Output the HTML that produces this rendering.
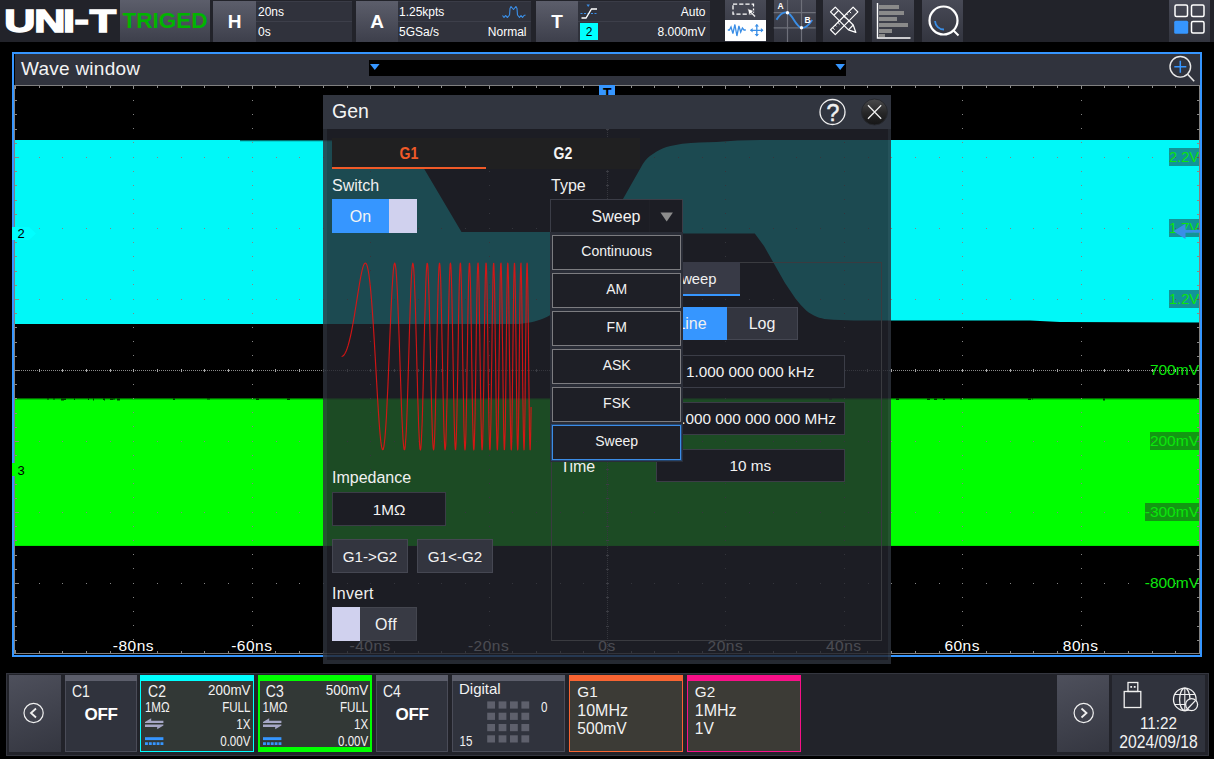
<!DOCTYPE html>
<html><head><meta charset="utf-8"><title>Oscilloscope - Gen</title>
<style>
html,body{margin:0;padding:0;background:#000;}
body{width:1214px;height:759px;position:relative;overflow:hidden;font-family:"Liberation Sans",sans-serif;color:#fff;}
.a{position:absolute;box-sizing:border-box;}
.t{position:absolute;white-space:nowrap;line-height:1;}
.c{text-align:center;}
.r{text-align:right;}
.b{font-weight:bold;}
#top{left:0;top:0;width:1214px;height:42px;background:#22232a;}
.tb{background:linear-gradient(#5c5e6b,#3d3f4b);}
.tp{background:#30323c;}
.ti{background:linear-gradient(#484a56,#33353f);}
.f12{font-size:12px;}
.f13{font-size:13px;}
.f14{font-size:14px;}
.f15{font-size:15px;}
.f16{font-size:16px;}
</style></head><body>
<div class="a" id="top">
<svg class="a" style="left:0;top:0" width="120" height="42"><text transform="scale(1.39 1)" x="3.10 24.69 45.33 53.52 64.59" y="32.1 32.1 32.1 29.6 32.1" font-family="Liberation Sans, sans-serif" font-weight="bold" font-size="31" fill="#fff" stroke="#fff" stroke-width="1.8" vector-effect="non-scaling-stroke" stroke-linejoin="miter">UNI-T</text></svg>
<div class="a tb" style="left:120px;top:0;width:90px;height:42px;"></div>
<div class="t b c" style="left:120px;top:10.4px;width:90px;font-size:22.5px;color:#00b400;">TRIGED</div>

<div class="a tb" style="left:213px;top:1px;width:43px;height:41px;"></div>
<div class="t b c" style="left:213px;top:12px;width:43px;font-size:19px;">H</div>
<div class="a tp" style="left:256px;top:1px;width:95.5px;height:41px;border-top:1px solid #3a3c47"></div>
<div class="a" style="left:256px;top:21px;width:95.5px;height:1px;background:#3d3f4a"></div>
<div class="t f12" style="left:258px;top:6px;">20ns</div>
<div class="t f12" style="left:258px;top:26px;">0s</div>

<div class="a tb" style="left:356px;top:1px;width:42px;height:41px;"></div>
<div class="t b c" style="left:356px;top:12px;width:42px;font-size:19px;">A</div>
<div class="a tp" style="left:398px;top:1px;width:133px;height:41px;border-top:1px solid #3a3c47"></div>
<div class="a" style="left:398px;top:21px;width:133px;height:1px;background:#3d3f4a"></div>
<div class="t f12" style="left:399px;top:6px;">1.25kpts</div>
<div class="t f12" style="left:399px;top:26px;">5GSa/s</div>
<div class="t f12 r" style="left:460px;width:66.5px;top:26px;">Normal</div>
<svg class="a" style="left:500px;top:4px" width="28" height="16"><path d="M2.5 11.5 L4 13.5 L5.5 11.5 L7.5 13.5 L9.5 11 L10 4.5 L11 2.5 L13.5 5.5 L15.9 2.5 L17 4.5 L17.5 11 L19.5 13.5 L21 11.5 L22.5 13.5 L24 11.5 L25.5 11" fill="none" stroke="#3a8ee6" stroke-width="1.15" stroke-linejoin="round"/></svg>

<div class="a tb" style="left:536px;top:1px;width:42px;height:41px;"></div>
<div class="t b c" style="left:536px;top:12px;width:42px;font-size:19px;">T</div>
<div class="a tp" style="left:578px;top:1px;width:132px;height:41px;border-top:1px solid #3a3c47"></div>
<div class="a" style="left:578px;top:21px;width:132px;height:1px;background:#3d3f4a"></div>
<svg class="a" style="left:580px;top:3px" width="20" height="18"><path d="M0.5 10.5 h17" stroke="#3a8ee6" stroke-width="1" stroke-dasharray="2 1.5" fill="none"/><path d="M1.5 15 h4.5 l5.5 -9 h5.5" stroke="#fff" stroke-width="1.3" fill="none"/><path d="M6.5 1.5 h3.4 l-1.7 2.6 z" fill="#3a8ee6"/></svg>
<div class="a" style="left:580px;top:23px;width:18px;height:17px;background:#00ffff"></div>
<div class="t f12 c" style="left:580px;top:26px;width:18px;color:#000;">2</div>
<div class="t f12 r" style="left:640px;width:65.5px;top:6px;">Auto</div>
<div class="t f12 r" style="left:640px;width:65.5px;top:26px;">8.000mV</div>

<div class="a ti" style="left:724.5px;top:0;width:41.7px;height:42px;"></div>
<div class="a" style="left:724.5px;top:20px;width:41.7px;height:21px;background:#fff"></div>
<svg class="a" style="left:720px;top:0" width="48" height="42">
<rect x="13" y="4.2" width="20.5" height="10" fill="none" stroke="#fff" stroke-width="1.3" stroke-dasharray="4.2 2"/>
<path d="M27.5 8.6 l7 2.4 l-2.6 1.1 l3.9 4 l-1.3 1.2 l-3.8 -4 l-1.3 2.5 z" fill="#fff" stroke="#3c3e49" stroke-width="0.7"/>
<path d="M7.8 30 h1.6 l1.6 -3 l1.9 6.5 l2 -9 l2 11.5 l2 -10 l1.8 6 l1.7 -4 l1.6 2 h1.8" fill="none" stroke="#3a8ee6" stroke-width="1.3"/>
<path d="M30.5 30.3 h12.5 M36.8 24.6 v11.4" stroke="#3a8ee6" stroke-width="1.3" fill="none"/>
<path d="M30 30.3 l2.6 -2.2 v4.4z M43.5 30.3 l-2.6 -2.2 v4.4z M36.8 24 l-2.2 2.6 h4.4z M36.8 36.6 l-2.2 -2.6 h4.4z" fill="#3a8ee6"/>
</svg>

<div class="a ti" style="left:774px;top:0;width:42px;height:42px;"></div>
<svg class="a" style="left:772.3px;top:0" width="43.7" height="42">
<path d="M15.5 0 v42 M29.5 0 v42 M1.7 12.7 h42 M1.7 27.8 h42" stroke="#6e707a" stroke-width="1.2" fill="none"/>
<path d="M4.5 19.8 C8 14,12 11.5,15.5 12.7 C21 15,23.5 26.5,29.5 27.8 C34 28.6,37.5 24,40.2 20" fill="none" stroke="#3a8ee6" stroke-width="1.9"/>
<circle cx="15.5" cy="12.7" r="1.7" fill="#fff"/><circle cx="29.5" cy="27.8" r="1.7" fill="#fff"/>
<text x="5.6" y="8.7" font-size="8.5" font-weight="bold" fill="#fff" font-family="Liberation Sans, sans-serif">A</text>
<text x="32.6" y="22.8" font-size="8.5" font-weight="bold" fill="#fff" font-family="Liberation Sans, sans-serif">B</text>
</svg>

<div class="a ti" style="left:823px;top:0;width:42px;height:42px;"></div>
<svg class="a" style="left:822px;top:0" width="44" height="42">
<g fill="none" stroke="#fff" stroke-width="1.3" stroke-linejoin="round">
<g transform="translate(22.2,20.8) scale(0.94) rotate(45)"><rect x="-3.6" y="-17" width="7.2" height="34"/><path d="M-3.6 -11 h3 M-3.6 -7 h2 M-3.6 -3 h3 M-3.6 6 h3 M-3.6 10 h2 M-3.6 14 h3" stroke-width="1"/></g>
<g transform="translate(22.2,20.8) scale(0.94) rotate(-45)"><path d="M-3.6 -17 h7.2 v27 l-3.6 7.5 l-3.6 -7.5 z M-3.6 10 h7.2 M-3.6 -12 h7.2"/></g>
</g></svg>

<div class="a ti" style="left:872px;top:0;width:42px;height:42px;"></div>
<svg class="a" style="left:872px;top:0" width="44" height="42">
<g fill="#8a8a8a"><rect x="7" y="5" width="20" height="4"/><rect x="7" y="11" width="25" height="4"/><rect x="7" y="17" width="18" height="4"/><rect x="7" y="23" width="29" height="4"/><rect x="7" y="29" width="13" height="4"/><rect x="7" y="34" width="6" height="3"/></g>
<path d="M5.5 3 v35 h33" fill="none" stroke="#fff" stroke-width="1.4"/>
</svg>

<div class="a ti" style="left:921.5px;top:0;width:41.5px;height:42px;"></div>
<svg class="a" style="left:921.5px;top:0" width="45" height="42">
<circle cx="21.5" cy="20.5" r="14" fill="none" stroke="#fff" stroke-width="2.2"/>
<path d="M31.5 30.5 l5 5" stroke="#fff" stroke-width="2" fill="none"/>
<path d="M13 21 a9 9 0 0 0 9 8.5" fill="none" stroke="#3a8ee6" stroke-width="1.8"/>
</svg>

<div class="a ti" style="left:1169px;top:0;width:40.5px;height:42px;"></div>
<svg class="a" style="left:1168px;top:0" width="42" height="42">
<rect x="7" y="5" width="12.5" height="11.5" rx="1.5" fill="none" stroke="#fff" stroke-width="1.5"/>
<rect x="23.5" y="5" width="12.5" height="11.5" rx="1.5" fill="none" stroke="#fff" stroke-width="1.5"/>
<rect x="23.5" y="21.5" width="12.5" height="11.5" rx="1.5" fill="none" stroke="#fff" stroke-width="1.5"/>
<rect x="6.2" y="20.7" width="14" height="13" rx="1.5" fill="#3696ff"/>
</svg>
</div>
<div class="a" style="left:12.2px;top:52px;width:1189.8px;height:604.7px;border:2px solid #3696ff;border-left-width:2.3px;border-bottom-width:2.5px;background:#000;"></div>
<div class="a" style="left:15px;top:54px;width:1185px;height:31px;background:#30333d;"></div>
<div class="t" style="left:21px;top:59.1px;font-size:19px;letter-spacing:0.25px;color:#f4f4f4;">Wave window</div>
<div class="a" style="left:369px;top:60px;width:477px;height:16px;background:#000;"></div>
<svg class="a" style="left:369px;top:60px" width="477" height="16"><path d="M1 4 h9.6 l-4.8 6z M466.4 4 h9.6 l-4.8 6z" fill="#3696ff"/></svg>
<svg class="a" style="left:1165px;top:54px" width="34" height="31"><circle cx="15.3" cy="12.8" r="10.3" fill="none" stroke="#e8e8e8" stroke-width="1.4"/><path d="M22.6 20.2 l6.6 7" stroke="#e8e8e8" stroke-width="1.6"/><path d="M9.3 12.8 h12 M15.3 6.8 v12" stroke="#3696ff" stroke-width="1.5"/></svg>
<svg class="a" style="left:0;top:0" width="1214" height="759" shape-rendering="crispEdges">
<rect x="15" y="140" width="1185" height="183.5" fill="#00f8f8"/>
<rect x="15" y="398.5" width="1185" height="147.4" fill="#00ff00" shape-rendering="auto"/>
<g shape-rendering="auto">
<path d="M392 139 L392 140 C402 141,408 144,413 150 L461.5 232 L606 232 L623 199 L632.2 182.7 L642.7 164.3 C646 159,649 156,653.3 153.7 C658 150.5,662 148.5,666.5 147.1 C672 145.5,677 144.5,682.3 143.7 C694 142.6,705 142.2,716.5 141.9 L737.6 140.5 L760 140 L760 139 Z" fill="#000"/>
<path d="M518 324 C536 322.5,552 318,570 300 L622 233.6 L754.8 233.6 L764 246 L774.5 264.5 L785 283 L795.6 298.7 C799 303,802.5 307,806.2 310.6 C809.5 313.3,813 315.3,816.7 316.7 C820 318,823.5 318.8,827.3 319.3 C836 320.2,845 320.3,853.6 320.4 L1030 320.6 L1060 322 L1200 322.4 L1200 324 Z" fill="#000"/>
<path d="M240 140 h195 v1.2 h-195z " fill="#000" opacity="0.55"/>
<path d="M323 398.5 h1 v1.0 h-1 z M207 398.5 h3 v1.0 h-3 z M104 398.5 h1 v2.0 h-1 z M93 398.5 h1 v2.0 h-1 z M47 398.5 h2 v1.0 h-2 z M113 398.5 h2 v1.0 h-2 z M287 398.5 h3 v1.5 h-3 z M256 398.5 h3 v1.5 h-3 z M53 398.5 h2 v1.0 h-2 z M110 398.5 h3 v1.5 h-3 z M1103 398.5 h2 v2.0 h-2 z M943 398.5 h2 v1.5 h-2 z M63 398.5 h3 v1.5 h-3 z M1028 398.5 h3 v1.5 h-3 z M117 398.5 h3 v2.0 h-3 z M61 398.5 h3 v2.0 h-3 z M173 398.5 h2 v1.5 h-2 z M1032 398.5 h1 v1.0 h-1 z M74 398.5 h1 v1.5 h-1 z M927 398.5 h3 v1.5 h-3 z M960 398.5 h2 v1.0 h-2 z M103 398.5 h2 v1.5 h-2 z M829 398.5 h3 v1.0 h-3 z M934 398.5 h3 v1.5 h-3 z M896 398.5 h3 v1.5 h-3 z M88 398.5 h1 v1.5 h-1 z" fill="#000" opacity="0.75"/>
<path d="M15 398.5 h1185 v1 h-1185z" fill="#003800" opacity="0.5"/>
</g>
<path d="M38.70 157.5 H1200" stroke="#858585" stroke-width="1" stroke-dasharray="1 22.680" fill="none"/>
<path d="M38.70 228.5 H1200" stroke="#858585" stroke-width="1" stroke-dasharray="1 22.680" fill="none"/>
<path d="M38.70 299.5 H1200" stroke="#858585" stroke-width="1" stroke-dasharray="1 22.680" fill="none"/>
<path d="M38.70 441.5 H1200" stroke="#858585" stroke-width="1" stroke-dasharray="1 22.680" fill="none"/>
<path d="M38.70 512.5 H1200" stroke="#858585" stroke-width="1" stroke-dasharray="1 22.680" fill="none"/>
<path d="M38.70 583.5 H1200" stroke="#858585" stroke-width="1" stroke-dasharray="1 22.680" fill="none"/>
<path d="M133.5 99.70 V654" stroke="#858585" stroke-width="1" stroke-dasharray="1 13.200" fill="none"/>
<path d="M252.5 99.70 V654" stroke="#858585" stroke-width="1" stroke-dasharray="1 13.200" fill="none"/>
<path d="M370.5 99.70 V654" stroke="#858585" stroke-width="1" stroke-dasharray="1 13.200" fill="none"/>
<path d="M489.5 99.70 V654" stroke="#858585" stroke-width="1" stroke-dasharray="1 13.200" fill="none"/>
<path d="M725.5 99.70 V654" stroke="#858585" stroke-width="1" stroke-dasharray="1 13.200" fill="none"/>
<path d="M844.5 99.70 V654" stroke="#858585" stroke-width="1" stroke-dasharray="1 13.200" fill="none"/>
<path d="M962.5 99.70 V654" stroke="#858585" stroke-width="1" stroke-dasharray="1 13.200" fill="none"/>
<path d="M1081.5 99.70 V654" stroke="#858585" stroke-width="1" stroke-dasharray="1 13.200" fill="none"/>
<path d="M15 370.5 H1199" stroke="#8c8c8c" stroke-width="1" stroke-dasharray="1 1" fill="none"/>
<path d="M607.5 86 V653" stroke="#8c8c8c" stroke-width="1" stroke-dasharray="1 1" fill="none"/>
<path d="M39.5 369 v3 M62.5 369 v3 M86.5 369 v3 M110.5 369 v3 M133.5 369 v3 M157.5 369 v3 M181.5 369 v3 M204.5 369 v3 M228.5 369 v3 M252.5 369 v3 M275.5 369 v3 M299.5 369 v3 M323.5 369 v3 M347.5 369 v3 M370.5 369 v3 M394.5 369 v3 M418.5 369 v3 M441.5 369 v3 M465.5 369 v3 M489.5 369 v3 M512.5 369 v3 M536.5 369 v3 M560.5 369 v3 M583.5 369 v3 M607.5 369 v3 M631.5 369 v3 M654.5 369 v3 M678.5 369 v3 M702.5 369 v3 M725.5 369 v3 M749.5 369 v3 M773.5 369 v3 M796.5 369 v3 M820.5 369 v3 M844.5 369 v3 M867.5 369 v3 M891.5 369 v3 M915.5 369 v3 M939.5 369 v3 M962.5 369 v3 M986.5 369 v3 M1010.5 369 v3 M1033.5 369 v3 M1057.5 369 v3 M1081.5 369 v3 M1104.5 369 v3 M1128.5 369 v3 M1152.5 369 v3 M1175.5 369 v3 M606 100.5 h3 M606 114.5 h3 M606 129.5 h3 M606 143.5 h3 M606 157.5 h3 M606 171.5 h3 M606 185.5 h3 M606 200.5 h3 M606 214.5 h3 M606 228.5 h3 M606 242.5 h3 M606 256.5 h3 M606 271.5 h3 M606 285.5 h3 M606 299.5 h3 M606 313.5 h3 M606 327.5 h3 M606 342.5 h3 M606 356.5 h3 M606 370.5 h3 M606 384.5 h3 M606 398.5 h3 M606 413.5 h3 M606 427.5 h3 M606 441.5 h3 M606 455.5 h3 M606 469.5 h3 M606 484.5 h3 M606 498.5 h3 M606 512.5 h3 M606 526.5 h3 M606 540.5 h3 M606 555.5 h3 M606 569.5 h3 M606 583.5 h3 M606 597.5 h3 M606 611.5 h3 M606 626.5 h3 M606 640.5 h3" stroke="#aaa" stroke-width="1" fill="none"/>
<path d="M14.5 85.5 H1200 M14.5 85 V654 M1199.5 86 V654 M14 653.5 H1200" stroke="#808080" stroke-width="1" fill="none"/>
<path d="M15.5 86 v3 M15.5 653 v-3 M39.5 86 v2 M39.5 653 v-2 M62.5 86 v2 M62.5 653 v-2 M86.5 86 v2 M86.5 653 v-2 M110.5 86 v2 M110.5 653 v-2 M133.5 86 v3 M133.5 653 v-3 M157.5 86 v2 M157.5 653 v-2 M181.5 86 v2 M181.5 653 v-2 M204.5 86 v2 M204.5 653 v-2 M228.5 86 v2 M228.5 653 v-2 M252.5 86 v3 M252.5 653 v-3 M275.5 86 v2 M275.5 653 v-2 M299.5 86 v2 M299.5 653 v-2 M323.5 86 v2 M323.5 653 v-2 M347.5 86 v2 M347.5 653 v-2 M370.5 86 v3 M370.5 653 v-3 M394.5 86 v2 M394.5 653 v-2 M418.5 86 v2 M418.5 653 v-2 M441.5 86 v2 M441.5 653 v-2 M465.5 86 v2 M465.5 653 v-2 M489.5 86 v3 M489.5 653 v-3 M512.5 86 v2 M512.5 653 v-2 M536.5 86 v2 M536.5 653 v-2 M560.5 86 v2 M560.5 653 v-2 M583.5 86 v2 M583.5 653 v-2 M607.5 86 v3 M607.5 653 v-3 M631.5 86 v2 M631.5 653 v-2 M654.5 86 v2 M654.5 653 v-2 M678.5 86 v2 M678.5 653 v-2 M702.5 86 v2 M702.5 653 v-2 M725.5 86 v3 M725.5 653 v-3 M749.5 86 v2 M749.5 653 v-2 M773.5 86 v2 M773.5 653 v-2 M796.5 86 v2 M796.5 653 v-2 M820.5 86 v2 M820.5 653 v-2 M844.5 86 v3 M844.5 653 v-3 M867.5 86 v2 M867.5 653 v-2 M891.5 86 v2 M891.5 653 v-2 M915.5 86 v2 M915.5 653 v-2 M939.5 86 v2 M939.5 653 v-2 M962.5 86 v3 M962.5 653 v-3 M986.5 86 v2 M986.5 653 v-2 M1010.5 86 v2 M1010.5 653 v-2 M1033.5 86 v2 M1033.5 653 v-2 M1057.5 86 v2 M1057.5 653 v-2 M1081.5 86 v3 M1081.5 653 v-3 M1104.5 86 v2 M1104.5 653 v-2 M1128.5 86 v2 M1128.5 653 v-2 M1152.5 86 v2 M1152.5 653 v-2 M1175.5 86 v2 M1175.5 653 v-2 M1199.5 86 v3 M1199.5 653 v-3 M15 100.5 h2 M1199 100.5 h-2 M15 114.5 h2 M1199 114.5 h-2 M15 129.5 h2 M1199 129.5 h-2 M15 143.5 h2 M1199 143.5 h-2 M15 157.5 h4 M1199 157.5 h-4 M15 171.5 h2 M1199 171.5 h-2 M15 185.5 h2 M1199 185.5 h-2 M15 200.5 h2 M1199 200.5 h-2 M15 214.5 h2 M1199 214.5 h-2 M15 228.5 h4 M1199 228.5 h-4 M15 242.5 h2 M1199 242.5 h-2 M15 256.5 h2 M1199 256.5 h-2 M15 271.5 h2 M1199 271.5 h-2 M15 285.5 h2 M1199 285.5 h-2 M15 299.5 h4 M1199 299.5 h-4 M15 313.5 h2 M1199 313.5 h-2 M15 327.5 h2 M1199 327.5 h-2 M15 342.5 h2 M1199 342.5 h-2 M15 356.5 h2 M1199 356.5 h-2 M15 370.5 h4 M1199 370.5 h-4 M15 384.5 h2 M1199 384.5 h-2 M15 398.5 h2 M1199 398.5 h-2 M15 413.5 h2 M1199 413.5 h-2 M15 427.5 h2 M1199 427.5 h-2 M15 441.5 h4 M1199 441.5 h-4 M15 455.5 h2 M1199 455.5 h-2 M15 469.5 h2 M1199 469.5 h-2 M15 484.5 h2 M1199 484.5 h-2 M15 498.5 h2 M1199 498.5 h-2 M15 512.5 h4 M1199 512.5 h-4 M15 526.5 h2 M1199 526.5 h-2 M15 540.5 h2 M1199 540.5 h-2 M15 555.5 h2 M1199 555.5 h-2 M15 569.5 h2 M1199 569.5 h-2 M15 583.5 h4 M1199 583.5 h-4 M15 597.5 h2 M1199 597.5 h-2 M15 611.5 h2 M1199 611.5 h-2 M15 626.5 h2 M1199 626.5 h-2 M15 640.5 h2 M1199 640.5 h-2" stroke="#8a8a8a" stroke-width="1" fill="none"/>
</svg>
<div class="a" style="left:599.3px;top:85.2px;width:15.8px;height:12px;background:#3696ff;"></div><div class="t b c" style="left:599.3px;top:85.8px;width:15.8px;font-size:14px;color:#000;">T</div>
<svg class="a" style="left:12px;top:226px" width="26" height="16"><path d="M0 1 h17 l7 6.5 l-7 6.5 h-17z" fill="#00ffff"/></svg><div class="t" style="left:17.6px;top:227.2px;font-size:13px;color:#000;">2</div>
<svg class="a" style="left:12px;top:462px" width="26" height="16"><path d="M0 1 h17 l7 6.5 l-7 6.5 h-17z" fill="#00ff00"/></svg><div class="t" style="left:17.6px;top:463.7px;font-size:13px;color:#000;">3</div>
<div class="t c" style="left:93.4px;top:637.8px;width:80px;font-size:15.5px;letter-spacing:0.5px;">-80ns</div>
<div class="t c" style="left:211.8px;top:637.8px;width:80px;font-size:15.5px;letter-spacing:0.5px;">-60ns</div>
<div class="t c" style="left:330.2px;top:637.8px;width:80px;font-size:15.5px;letter-spacing:0.5px;">-40ns</div>
<div class="t c" style="left:448.6px;top:637.8px;width:80px;font-size:15.5px;letter-spacing:0.5px;">-20ns</div>
<div class="t c" style="left:567.0px;top:637.8px;width:80px;font-size:15.5px;letter-spacing:0.5px;">0s</div>
<div class="t c" style="left:685.4px;top:637.8px;width:80px;font-size:15.5px;letter-spacing:0.5px;">20ns</div>
<div class="t c" style="left:803.8px;top:637.8px;width:80px;font-size:15.5px;letter-spacing:0.5px;">40ns</div>
<div class="t c" style="left:922.2px;top:637.8px;width:80px;font-size:15.5px;letter-spacing:0.5px;">60ns</div>
<div class="t c" style="left:1040.6px;top:637.8px;width:80px;font-size:15.5px;letter-spacing:0.5px;">80ns</div>
<div class="t" style="right:15px;top:147.5px;height:18px;line-height:18.5px;font-size:14.6px;color:#0ce60c;background:rgba(40,30,40,0.46);">2.2V</div>
<div class="t" style="right:15px;top:218.5px;height:18px;line-height:18.5px;font-size:14.6px;color:#0ce60c;background:rgba(40,30,40,0.46);">1.7V</div>
<div class="t" style="right:15px;top:289.5px;height:18px;line-height:18.5px;font-size:14.6px;color:#0ce60c;background:rgba(40,30,40,0.46);">1.2V</div>
<div class="t" style="right:15px;top:360.5px;height:18px;line-height:18.5px;font-size:15.5px;color:#0ce60c;">700mV</div>
<div class="t" style="right:15px;top:431.5px;height:18px;line-height:18.5px;font-size:15.5px;color:#0ce60c;background:rgba(40,30,40,0.46);">200mV</div>
<div class="t" style="right:15px;top:502.5px;height:18px;line-height:18.5px;font-size:15.5px;color:#0ce60c;background:rgba(40,30,40,0.46);">-300mV</div>
<div class="t" style="right:15px;top:573.5px;height:18px;line-height:18.5px;font-size:15.5px;color:#0ce60c;">-800mV</div>
<svg class="a" style="left:1170px;top:222px" width="30" height="18"><path d="M3.4 9.3 l12.1 -7.6 v6.3 h14.5 v2.7 h-14.5 v6.2 z" fill="#3a8ee6"/></svg>
<style>
.fld{background:#1c1d24;border:1px solid #3b3d47;font-size:15.3px;text-align:center;color:#f2f2f2;}
.btn{background:#33353f;border:1px solid #454752;font-size:16px;text-align:center;color:#f2f2f2;}
.lbl{font-size:16px;color:#f0f0f0;}
.itm{left:552px;width:129.4px;height:35px;background:#1e1f26;border:1px solid #7c7c80;font-size:14px;line-height:31.6px;text-align:center;color:#f2f2f2;}
</style>
<div class="a" style="left:323px;top:95px;width:568.2px;height:34px;background:#31353f;"></div>
<div class="a" style="left:323px;top:129px;width:3.5px;height:534.6px;background:rgba(45,49,59,0.83);"></div>
<div class="a" style="left:888.2px;top:129px;width:3px;height:534.6px;background:rgba(45,49,59,0.83);"></div>
<div class="a" style="left:326.5px;top:660px;width:561.7px;height:3.6px;background:rgba(45,49,59,0.83);"></div>
<div class="a" style="left:326.5px;top:129px;width:561.7px;height:531px;background:rgba(34,35,44,0.82);"></div>
<div class="t" style="left:332px;top:102.3px;font-size:19.5px;color:#f4f4f4;">Gen</div>
<svg class="a" style="left:815px;top:95px" width="77" height="34">
<circle cx="17.5" cy="17" r="12.5" fill="none" stroke="#f0f0f0" stroke-width="1.3"/>
<text x="18" y="25.9" text-anchor="middle" font-family="Liberation Sans, sans-serif" font-size="23" fill="#f0f0f0" stroke="#f0f0f0" stroke-width="0.5">?</text>
<defs><linearGradient id="cg" x1="0" y1="0" x2="0" y2="1"><stop offset="0" stop-color="#4a4a4c"/><stop offset="0.55" stop-color="#262627"/><stop offset="1" stop-color="#151516"/></linearGradient></defs><circle cx="59.5" cy="17" r="13" fill="url(#cg)" stroke="#26282e" stroke-width="1"/>
<path d="M53 10.3 l13.2 13.5 M66.2 10.3 l-13.2 13.5" stroke="#f0f0f0" stroke-width="1.25"/>
</svg>
<!-- tabs -->
<div class="a" style="left:332px;top:138px;width:308px;height:31px;background:#202021;"></div>
<div class="a" style="left:332px;top:166.5px;width:154px;height:2.5px;background:#f05a28;"></div>
<div class="t b c" style="left:332px;top:146.2px;width:154px;font-size:16px;color:#f05a28;transform:scaleX(0.88);">G1</div>
<div class="t b c" style="left:486px;top:146.2px;width:154px;font-size:16px;color:#f4f4f4;transform:scaleX(0.88);">G2</div>
<!-- left column -->
<div class="t lbl" style="left:332px;top:178px;">Switch</div>
<div class="a" style="left:332px;top:199px;width:57px;height:34px;background:#3696ff;"></div>
<div class="t c" style="left:332px;top:209px;width:57px;font-size:16px;color:#f4f4f4;">On</div>
<div class="a" style="left:389px;top:199px;width:28px;height:34px;background:#d0d1ee;"></div>
<svg class="a" style="left:0;top:0" width="1214" height="759"><polyline points="341.6,356.5 342.4,356.3 343.2,355.8 344.0,355.0 344.8,353.8 345.6,352.3 346.4,350.5 347.2,348.3 348.0,345.9 348.8,343.0 349.6,339.9 350.4,336.5 351.2,332.8 352.0,328.8 352.8,324.5 353.6,320.0 354.4,315.3 355.2,310.4 356.0,305.5 356.8,300.4 357.6,295.3 358.4,290.3 359.2,285.5 360.0,280.8 360.8,276.5 361.6,272.6 362.4,269.2 363.2,266.4 364.0,264.4 364.8,263.2 365.6,263.1 366.4,263.9 367.2,266.0 368.0,269.3 368.8,274.0 369.6,280.0 370.4,287.4 371.2,296.2 372.0,306.2 372.8,317.5 373.6,329.8 374.4,343.0 375.2,356.7 376.0,370.9 376.8,384.9 377.6,398.7 378.4,411.6 379.2,423.3 380.0,433.4 380.8,441.4 381.6,446.9 382.4,449.7 383.2,449.5 384.0,446.0 384.8,439.2 385.6,429.5 386.4,417.1 387.1,402.6 387.9,386.4 388.6,369.1 389.3,351.4 390.0,333.9 390.7,317.2 391.4,301.9 392.1,288.5 392.8,277.7 393.4,269.6 394.1,264.6 394.7,263.0 395.3,264.7 396.0,269.7 396.6,277.8 397.2,288.7 397.8,302.1 398.4,317.4 399.0,334.1 399.6,351.6 400.2,369.2 400.8,386.4 401.3,402.6 401.9,417.1 402.5,429.4 403.0,439.1 403.6,445.9 404.1,449.4 404.7,449.7 405.2,446.6 405.7,440.3 406.3,431.0 406.8,419.1 407.3,404.9 407.8,389.0 408.3,371.9 408.8,354.3 409.3,336.7 409.8,319.9 410.3,304.4 410.8,290.7 411.3,279.4 411.8,270.8 412.3,265.3 412.8,263.1 413.2,264.1 413.7,268.5 414.2,276.0 414.6,286.4 415.1,299.3 415.6,314.2 416.0,330.6 416.5,348.0 416.9,365.6 417.4,382.9 417.8,399.3 418.3,414.2 418.7,427.0 419.2,437.3 419.6,444.7 420.0,449.0 420.5,449.9 420.9,447.6 421.3,442.0 421.7,433.3 422.2,422.0 422.6,408.3 423.0,392.7 423.4,375.9 423.8,358.4 424.2,340.8 424.6,323.7 425.1,307.9 425.5,293.7 425.9,281.8 426.3,272.6 426.7,266.3 427.1,263.3 427.5,263.6 427.9,267.1 428.2,273.9 428.6,283.6 429.0,295.9 429.4,310.3 429.8,326.4 430.2,343.6 430.6,361.2 430.9,378.7 431.3,395.3 431.7,410.6 432.1,424.0 432.4,434.9 432.8,443.1 433.2,448.2 433.6,450.0 433.9,448.5 434.3,443.7 434.7,435.8 435.0,425.2 435.4,412.0 435.7,396.9 436.1,380.4 436.5,363.0 436.8,345.3 437.2,328.1 437.5,311.9 437.9,297.3 438.2,284.7 438.6,274.8 438.9,267.7 439.3,263.8 439.6,263.2 440.0,265.9 440.3,271.8 440.7,280.7 441.0,292.4 441.3,306.3 441.7,322.0 442.0,338.9 442.4,356.4 442.7,374.0 443.0,390.9 443.4,406.6 443.7,420.5 444.0,432.2 444.4,441.1 444.7,447.1 445.0,449.8 445.3,449.2 445.7,445.4 446.0,438.3 446.3,428.4 446.6,415.9 447.0,401.2 447.3,385.0 447.6,367.8 447.9,350.2 448.2,332.8 448.6,316.3 448.9,301.1 449.2,288.0 449.5,277.3 449.8,269.4 450.1,264.5 450.4,263.0 450.8,264.8 451.1,269.8 451.4,277.9 451.7,288.8 452.0,302.1 452.3,317.4 452.6,334.0 452.9,351.4 453.2,369.1 453.5,386.2 453.8,402.3 454.1,416.8 454.4,429.1 454.7,438.9 455.0,445.7 455.3,449.4 455.6,449.7 455.9,446.8 456.2,440.6 456.5,431.5 456.8,419.7 457.1,405.6 457.4,389.8 457.7,372.9 458.0,355.3 458.3,337.8 458.5,320.9 458.8,305.3 459.1,291.6 459.4,280.1 459.7,271.3 460.0,265.6 460.3,263.1 460.6,263.9 460.8,268.0 461.1,275.3 461.4,285.4 461.7,298.1 462.0,312.8 462.3,329.1 462.5,346.3 462.8,363.9 463.1,381.3 463.4,397.8 463.7,412.8 463.9,425.8 464.2,436.3 464.5,444.0 464.8,448.6 465.0,450.0 465.3,448.0 465.6,442.8 465.9,434.5 466.1,423.4 466.4,410.0 466.7,394.6 466.9,377.9 467.2,360.5 467.5,342.9 467.7,325.8 468.0,309.8 468.3,295.4 468.5,283.2 468.8,273.6 469.1,267.0 469.3,263.5 469.6,263.3 469.9,266.5 470.1,272.8 470.4,282.1 470.7,294.1 470.9,308.2 471.2,324.1 471.5,341.1 471.7,358.7 472.0,376.2 472.2,393.0 472.5,408.5 472.7,422.1 473.0,433.5 473.3,442.1 473.5,447.6 473.8,449.9 474.0,448.9 474.3,444.7 474.5,437.3 474.8,427.0 475.1,414.2 475.3,399.4 475.6,383.0 475.8,365.8 476.1,348.1 476.3,330.8 476.6,314.4 476.8,299.5 477.1,286.6 477.3,276.2 477.6,268.6 477.8,264.2 478.1,263.0 478.3,265.2 478.6,270.6 478.8,279.0 479.1,290.2 479.3,303.7 479.5,319.2 479.8,335.9 480.0,353.4 480.3,371.0 480.5,388.0 480.8,404.0 481.0,418.2 481.3,430.3 481.5,439.8 481.7,446.3 482.0,449.6 482.2,449.6 482.5,446.3 482.7,439.8 482.9,430.4 483.2,418.3 483.4,404.1 483.7,388.1 483.9,371.1 484.1,353.5 484.4,336.0 484.6,319.3 484.8,303.9 485.1,290.3 485.3,279.1 485.6,270.6 485.8,265.2 486.0,263.0 486.3,264.2 486.5,268.6 486.7,276.1 487.0,286.5 487.2,299.4 487.4,314.3 487.7,330.7 487.9,348.0 488.1,365.6 488.3,382.9 488.6,399.2 488.8,414.1 489.0,426.9 489.3,437.2 489.5,444.6 489.7,448.9 490.0,449.9 490.2,447.7 490.4,442.1 490.6,433.6 490.9,422.3 491.1,408.7 491.3,393.2 491.5,376.4 491.8,358.9 492.0,341.3 492.2,324.3 492.4,308.4 492.7,294.2 492.9,282.3 493.1,272.9 493.3,266.5 493.6,263.4 493.8,263.5 494.0,266.9 494.2,273.5 494.5,283.0 494.7,295.2 494.9,309.5 495.1,325.5 495.3,342.6 495.6,360.2 495.8,377.6 496.0,394.3 496.2,409.7 496.4,423.2 496.7,434.3 496.9,442.6 497.1,447.9 497.3,450.0 497.5,448.7 497.7,444.2 498.0,436.5 498.2,426.0 498.4,413.1 498.6,398.1 498.8,381.7 499.0,364.4 499.3,346.8 499.5,329.5 499.7,313.2 499.9,298.4 500.1,285.7 500.3,275.5 500.5,268.2 500.7,264.0 501.0,263.1 501.2,265.5 501.4,271.1 501.6,279.8 501.8,291.2 502.0,304.9 502.2,320.4 502.4,337.2 502.7,354.7 502.9,372.3 503.1,389.3 503.3,405.1 503.5,419.2 503.7,431.1 503.9,440.4 504.1,446.6 504.3,449.7 504.5,449.5 504.7,445.9 504.9,439.2 505.2,429.6 505.4,417.4 505.6,403.0 505.8,386.9 506.0,369.8 506.2,352.2 506.4,334.8 506.6,318.1 506.8,302.8 507.0,289.4 507.2,278.4 507.4,270.1 507.6,265.0 507.8,263.0 508.0,264.4 508.2,269.0 508.4,276.8 508.6,287.3 508.8,300.4 509.0,315.4 509.2,331.9 509.4,349.2 509.6,366.8 509.9,384.0 510.1,400.3 510.3,415.0 510.5,427.7 510.7,437.8 510.9,445.0 511.1,449.1 511.3,449.9 511.5,447.4 511.7,441.7 511.9,432.9 512.0,421.4 512.2,407.7 512.4,392.1 512.6,375.3 512.8,357.8 513.0,340.2 513.2,323.2 513.4,307.4 513.6,293.4 513.8,281.6 514.0,272.4 514.2,266.2 514.4,263.3 514.6,263.6 514.8,267.2 515.0,274.0 515.2,283.7 515.4,296.0 515.6,310.5 515.8,326.6 516.0,343.7 516.2,361.3 516.4,378.7 516.6,395.3 516.8,410.6 516.9,423.9 517.1,434.9 517.3,443.1 517.5,448.1 517.7,450.0 517.9,448.5 518.1,443.8 518.3,436.0 518.5,425.3 518.7,412.2 518.9,397.2 519.1,380.7 519.2,363.3 519.4,345.7 519.6,328.5 519.8,312.2 520.0,297.6 520.2,285.0 520.4,275.0 520.6,267.8 520.8,263.8 521.0,263.1 521.1,265.7 521.3,271.5 521.5,280.4 521.7,291.9 521.9,305.7 522.1,321.3 522.3,338.2 522.5,355.7 522.6,373.3 522.8,390.2 523.0,406.0 523.2,420.0 523.4,431.7 523.6,440.8 523.8,446.9 524.0,449.8 524.1,449.3 524.3,445.6 524.5,438.8 524.7,429.0 524.9,416.6 525.1,402.1 525.2,386.0 525.4,368.8 525.6,351.2 525.8,333.8 526.0,317.2 526.2,302.0 526.3,288.7 526.5,277.9 526.7,269.8 526.9,264.8 527.1,263.0 527.3,264.6 527.4,269.4 527.6,277.3 527.8,288.0 528.0,301.1 528.2,316.2 528.4,332.8 528.5,350.1 528.7,367.7 528.9,385.0 529.1,401.1 529.3,415.8 529.4,428.3 529.6,438.2 529.8,445.3 530.0,449.2 530.2,449.8 530.3,447.2 530.5,441.3 530.7,432.4 530.9,420.8 531.1,406.9" fill="none" stroke="#e01414" stroke-width="1.15" stroke-linejoin="round" opacity="0.92"/></svg>

<div class="t lbl" style="left:332px;top:470px;">Impedance</div>
<div class="a fld" style="left:332px;top:492px;width:114px;height:34px;line-height:33px;">1M&#937;</div>
<div class="a btn" style="left:332px;top:539px;width:76px;height:34px;line-height:34px;font-size:15.2px;">G1-&gt;G2</div>
<div class="a btn" style="left:417px;top:539px;width:76px;height:34px;line-height:34px;font-size:15.2px;">G1&lt;-G2</div>
<div class="t lbl" style="left:332px;top:586px;letter-spacing:0.3px;">Invert</div>
<div class="a" style="left:332px;top:607px;width:28px;height:34px;background:#d0d1ee;"></div>
<div class="a" style="left:360px;top:607px;width:57px;height:34px;background:#383a44;border:1px solid #44464f;border-left:none"></div>
<div class="t c" style="left:357.5px;top:617px;width:57px;font-size:16px;color:#f2f2f2;letter-spacing:0.3px;">Off</div>
<!-- right column -->
<div class="t lbl" style="left:551px;top:178px;">Type</div>
<div class="a" style="left:551px;top:262px;width:331px;height:379px;border:1px solid #3a3b40;"></div>
<div class="a" style="left:656px;top:262px;width:84px;height:34px;background:#383a46;border-bottom:2px solid #3696ff;"></div>
<div class="t lbl" style="left:671.3px;top:272px;font-size:14.8px;">Sweep</div>
<div class="a" style="left:656px;top:307px;width:71px;height:33px;background:#3696ff;"></div>
<div class="t c lbl" style="left:656px;top:316px;width:71px;">Line</div>
<div class="a btn" style="left:727px;top:307px;width:71px;height:33px;line-height:31px;border-left:none">Log</div>
<div class="t lbl" style="left:560.3px;top:364px;">Start</div>
<div class="t lbl" style="left:560.3px;top:411px;">Stop</div>
<div class="t lbl" style="left:560.3px;top:459px;">Time</div>
<div class="a fld" style="left:655.5px;top:355px;width:189.5px;height:33px;line-height:31px;">1.000 000 000 kHz</div>
<div class="a fld" style="left:655.5px;top:402px;width:189.5px;height:33px;line-height:31px;text-align:right;padding-right:8px;overflow:hidden;">1.000 000 000 000 MHz</div>
<div class="a fld" style="left:655.5px;top:449px;width:189.5px;height:33px;line-height:31px;">10 ms</div>
<!-- combo + dropdown list -->
<div class="a" style="left:550px;top:199px;width:133px;height:34px;background:#1c1d24;border:1px solid #3b3d47;"></div>
<div class="a" style="left:649px;top:200px;width:1px;height:32px;background:#1f2027;"></div>
<div class="t c" style="left:551px;top:209.2px;width:130px;font-size:16px;color:#f2f2f2;">Sweep</div>
<svg class="a" style="left:658px;top:210px" width="18" height="14"><path d="M2.5 2.5 h12.4 l-6.2 9z" fill="#8c8c8c"/></svg>
<div class="a" style="left:550px;top:232px;width:133px;height:230px;background:#2a2d37;"></div>
<div class="a itm" style="top:235px;">Continuous</div>
<div class="a itm" style="top:273px;">AM</div>
<div class="a itm" style="top:311px;">FM</div>
<div class="a itm" style="top:349px;">ASK</div>
<div class="a itm" style="top:387px;">FSK</div>
<div class="a itm" style="top:425px;border:1.5px solid #3c8ce6;box-shadow:0 0 0 1px #24456e;line-height:31px;">Sweep</div>
<style>
.nb{background:linear-gradient(160deg,#4e505c,#343640);}
.ch{background:#30333d;border:1px solid #4a4c58;}
.s12{font-size:11.6px;color:#f2f2f2;transform:scaleY(1.2);transform-origin:0 84.65%;}
.sy{transform:scaleY(1.12);transform-origin:0 84.65%;}
</style>
<div class="a" style="left:6px;top:673px;width:1203px;height:83px;background:#22232a;border:1px solid #34363f;"></div>
<div class="a nb" style="left:9px;top:675px;width:52px;height:77px;"></div>
<svg class="a" style="left:9px;top:675px" width="52" height="77"><circle cx="24.6" cy="38" r="9.6" fill="none" stroke="#f0f0f0" stroke-width="1.2"/><path d="M27 33.5 l-5 4.5 l5 4.5" fill="none" stroke="#f0f0f0" stroke-width="1.8"/></svg>
<div class="a nb" style="left:1057px;top:675px;width:52px;height:77px;"></div>
<svg class="a" style="left:1057px;top:675px" width="52" height="77"><circle cx="26.7" cy="38" r="9.6" fill="none" stroke="#f0f0f0" stroke-width="1.2"/><path d="M24.5 33.5 l5 4.5 l-5 4.5" fill="none" stroke="#f0f0f0" stroke-width="1.8"/></svg>
<div class="a ch" style="left:65px;top:675px;width:72px;height:77px;"></div><div class="a" style="left:65px;top:675px;width:72px;height:6px;background:#5c5e6b;"></div><div class="t sy" style="left:72px;top:684.6px;font-size:14px;color:#f2f2f2;">C1</div><div class="t b c" style="left:65px;top:705.8px;width:72px;font-size:17px;letter-spacing:-0.3px;">OFF</div>
<div class="a" style="left:139.9px;top:674.6px;width:114.6px;height:77.6px;background:#323836;border:1.5px solid #00ffff;border-bottom-width:1.6px;"></div><div class="a" style="left:139.9px;top:674.6px;width:114.6px;height:6.5px;background:#00ffff;"></div><div class="t sy" style="left:148.1px;top:684.6px;font-size:14px;color:#f2f2f2;">C2</div><div class="t r sy" style="left:180.5px;width:70px;top:684.3px;font-size:13.4px;color:#f2f2f2;">200mV</div><div class="t s12" style="left:144.9px;top:701.7px;">1M&#937;</div><div class="t r s12" style="left:180.5px;width:70px;top:701.7px;">FULL</div><div class="t r s12" style="left:180.5px;width:70px;top:718.7px;">1X</div><div class="t r s12" style="left:180.5px;width:70px;top:735.9px;">0.00V</div><svg class="a" style="left:145.1px;top:716px" width="22" height="32"><path d="M0 5.9 L6.2 2.2 V4.7 H18.4 V7 H0z M18.4 9.6 L12.2 13.3 V10.9 H0 V8.5 H18.4z" fill="#a6a7c6"/><rect x="0" y="21.2" width="18.4" height="2.9" fill="#3696ff"/><path d="M0 27.6 H18.4" stroke="#3696ff" stroke-width="2.9" stroke-dasharray="2.9 0.975" fill="none"/></svg>
<div class="a" style="left:257.6px;top:674.6px;width:114.7px;height:77.6px;background:#323836;border:2.0px solid #00ff00;border-bottom-width:5.0px;"></div><div class="a" style="left:257.6px;top:674.6px;width:114.7px;height:6.5px;background:#00ff00;"></div><div class="t sy" style="left:265.8px;top:684.6px;font-size:14px;color:#f2f2f2;">C3</div><div class="t r sy" style="left:298.3px;width:70px;top:684.3px;font-size:13.4px;color:#f2f2f2;">500mV</div><div class="t s12" style="left:262.6px;top:701.7px;">1M&#937;</div><div class="t r s12" style="left:298.3px;width:70px;top:701.7px;">FULL</div><div class="t r s12" style="left:298.3px;width:70px;top:718.7px;">1X</div><div class="t r s12" style="left:298.3px;width:70px;top:735.9px;">0.00V</div><svg class="a" style="left:262.8px;top:716px" width="22" height="32"><path d="M0 5.9 L6.2 2.2 V4.7 H18.4 V7 H0z M18.4 9.6 L12.2 13.3 V10.9 H0 V8.5 H18.4z" fill="#a6a7c6"/><rect x="0" y="21.2" width="18.4" height="2.9" fill="#3696ff"/><path d="M0 27.6 H18.4" stroke="#3696ff" stroke-width="2.9" stroke-dasharray="2.9 0.975" fill="none"/></svg>
<div class="a ch" style="left:376px;top:675px;width:72px;height:77px;"></div><div class="a" style="left:376px;top:675px;width:72px;height:6px;background:#5c5e6b;"></div><div class="t sy" style="left:383px;top:684.6px;font-size:14px;color:#f2f2f2;">C4</div><div class="t b c" style="left:376px;top:705.8px;width:72px;font-size:17px;letter-spacing:-0.3px;">OFF</div>
<div class="a ch" style="left:452px;top:675px;width:113px;height:77px;"></div><div class="a" style="left:452px;top:675px;width:113px;height:6px;background:#5c5e6b;"></div><div class="t" style="left:459px;top:681px;font-size:15px;color:#f2f2f2;">Digital</div><div class="t s12" style="left:541px;top:702px;">0</div><div class="t s12" style="left:459.5px;top:736px;">15</div><svg class="a" style="left:0;top:0" width="1214" height="759"><g fill="#5e606c"><rect x="487.2" y="701.4" width="7.8" height="7.2"/><rect x="498.6" y="701.4" width="7.8" height="7.2"/><rect x="510.0" y="701.4" width="7.8" height="7.2"/><rect x="521.4" y="701.4" width="7.8" height="7.2"/><rect x="487.2" y="712.7" width="7.8" height="7.2"/><rect x="498.6" y="712.7" width="7.8" height="7.2"/><rect x="510.0" y="712.7" width="7.8" height="7.2"/><rect x="521.4" y="712.7" width="7.8" height="7.2"/><rect x="487.2" y="724.0" width="7.8" height="7.2"/><rect x="498.6" y="724.0" width="7.8" height="7.2"/><rect x="510.0" y="724.0" width="7.8" height="7.2"/><rect x="521.4" y="724.0" width="7.8" height="7.2"/><rect x="487.2" y="735.3" width="7.8" height="7.2"/><rect x="498.6" y="735.3" width="7.8" height="7.2"/><rect x="510.0" y="735.3" width="7.8" height="7.2"/><rect x="521.4" y="735.3" width="7.8" height="7.2"/></g></svg>
<div class="a" style="left:569.0px;top:674.6px;width:114.4px;height:77px;background:#3c3b36;border:1.2px solid #f86432;"></div><div class="a" style="left:569.0px;top:674.6px;width:114.4px;height:6.4px;background:#f86432;"></div><div class="t" style="left:577.3px;top:683.8px;font-size:15.3px;color:#f2f2f2;">G1</div><div class="t" style="left:577.3px;top:702.5px;font-size:16px;color:#f2f2f2;">10MHz</div><div class="t" style="left:577.3px;top:721.2px;font-size:15.6px;color:#f2f2f2;">500mV</div>
<div class="a" style="left:686.5px;top:674.6px;width:114.0px;height:77px;background:#3c3b36;border:1.2px solid #f81088;"></div><div class="a" style="left:686.5px;top:674.6px;width:114.0px;height:6.4px;background:#f81088;"></div><div class="t" style="left:694.8px;top:683.8px;font-size:15.3px;color:#f2f2f2;">G2</div><div class="t" style="left:694.8px;top:702.5px;font-size:16px;color:#f2f2f2;">1MHz</div><div class="t" style="left:694.8px;top:721.2px;font-size:15.6px;color:#f2f2f2;">1V</div>
<div class="a" style="left:1112px;top:675px;width:93px;height:77px;background:#30333d;"></div>
<svg class="a" style="left:1112px;top:675px" width="93" height="77">
<g fill="none" stroke="#f0f0f0" stroke-width="1.3">
<rect x="12.2" y="16.5" width="16.6" height="16"/><rect x="16" y="7.5" width="9.8" height="9"/>
<circle cx="72.8" cy="24.4" r="11.3"/><ellipse cx="72.8" cy="24.4" rx="5.2" ry="11.3"/><path d="M72.8 13 v22.6 M62.5 19.5 h20.6 M62.5 29.5 h13" stroke-width="1.1"/>
<circle cx="79.6" cy="29.6" r="6" fill="#30333d"/><path d="M75.6 33.8 l8 -8.4"/>
</g><rect x="18.3" y="11" width="1.8" height="1.8" fill="#f0f0f0"/><rect x="21.8" y="11" width="1.8" height="1.8" fill="#f0f0f0"/>
</svg>
<div class="t c sy" style="left:1112px;top:716px;width:93px;font-size:15.3px;color:#f2f2f2;transform-origin:50% 84.65%;">11:22</div>
<div class="t c sy" style="left:1112px;top:735.2px;width:93px;font-size:15.7px;color:#f2f2f2;transform-origin:50% 84.65%;">2024/09/18</div>
</body></html>
